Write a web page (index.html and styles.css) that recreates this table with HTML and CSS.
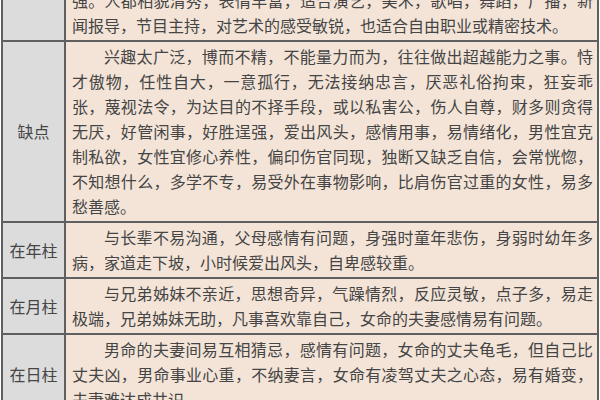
FILE: index.html
```html
<!DOCTYPE html>
<html lang="zh-CN">
<head>
<meta charset="utf-8">
<title>伤官</title>
<link rel="stylesheet" href="styles.css">
</head>
<body>
<table class="sheet">
  <colgroup><col class="col-label"><col class="col-text"></colgroup>
  <tr>
    <th class="label"></th>
    <td class="text">
      <span class="ln">强。人都相貌清秀，表情丰富，适合演艺，美术，歌唱，舞蹈，广播，新</span>
      <span class="ln end">闻报导，节目主持，对艺术的感受敏锐，也适合自由职业或精密技术。</span>
    </td>
  </tr>
  <tr>
    <th class="label">缺点</th>
    <td class="text">
      <span class="ln first">兴趣太广泛，博而不精，不能量力而为，往往做出超越能力之事。恃</span>
      <span class="ln">才傲物，任性自大，一意孤行，无法接纳忠言，厌恶礼俗拘束，狂妄乖</span>
      <span class="ln">张，蔑视法令，为达目的不择手段，或以私害公，伤人自尊，财多则贪得</span>
      <span class="ln">无厌，好管闲事，好胜逞强，爱出风头，感情用事，易情绪化，男性宜克</span>
      <span class="ln">制私欲，女性宜修心养性，偏印伤官同现，独断又缺乏自信，会常恍惚，</span>
      <span class="ln">不知想什么，多学不专，易受外在事物影响，比肩伤官过重的女性，易多</span>
      <span class="ln end">愁善感。</span>
    </td>
  </tr>
  <tr>
    <th class="label">在年柱</th>
    <td class="text">
      <span class="ln first">与长辈不易沟通，父母感情有问题，身强时童年悲伤，身弱时幼年多</span>
      <span class="ln end">病，家道走下坡，小时候爱出风头，自卑感较重。</span>
    </td>
  </tr>
  <tr>
    <th class="label">在月柱</th>
    <td class="text">
      <span class="ln first">与兄弟姊妹不亲近，思想奇异，气躁情烈，反应灵敏，点子多，易走</span>
      <span class="ln end">极端，兄弟姊妹无助，凡事喜欢靠自己，女命的夫妻感情易有问题。</span>
    </td>
  </tr>
  <tr>
    <th class="label">在日柱</th>
    <td class="text">
      <span class="ln first">男命的夫妻间易互相猜忌，感情有问题，女命的丈夫龟毛，但自己比</span>
      <span class="ln">丈夫凶，男命事业心重，不纳妻言，女命有凌驾丈夫之心态，易有婚变，</span>
      <span class="ln end">夫妻难达成共识。</span>
    </td>
  </tr>
</table>
</body>
</html>
```

FILE: styles.css
```css
html, body {
  margin: 0;
  padding: 0;
  background: #ffffff;
  overflow: hidden;
}

.sheet {
  border-collapse: collapse;
  table-layout: fixed;
  width: 596px;
  margin: -16px 0 0 1px;
  font-family: "Noto Sans CJK SC", "Noto Sans", sans-serif;
  font-size: 16px;
  color: #454545;
}

.col-label { width: 63px; }
.col-text { width: 533px; }

.sheet th,
.sheet td {
  border: 2px solid #5f5f5f;
  line-height: 25px;
}

.label {
  background: #dcdcdc;
  font-weight: normal;
  text-align: center;
  vertical-align: middle;
  padding: 0;
  white-space: nowrap;
}

.text {
  background: #f3e4d7;
  padding: 2px 4px 2px 6px;
  vertical-align: top;
}

.ln {
  display: block;
  text-align: justify;
  text-align-last: justify;
  white-space: nowrap;
}

.ln.first {
  text-indent: 2em;
}

.ln.end {
  text-align-last: left;
}
```
